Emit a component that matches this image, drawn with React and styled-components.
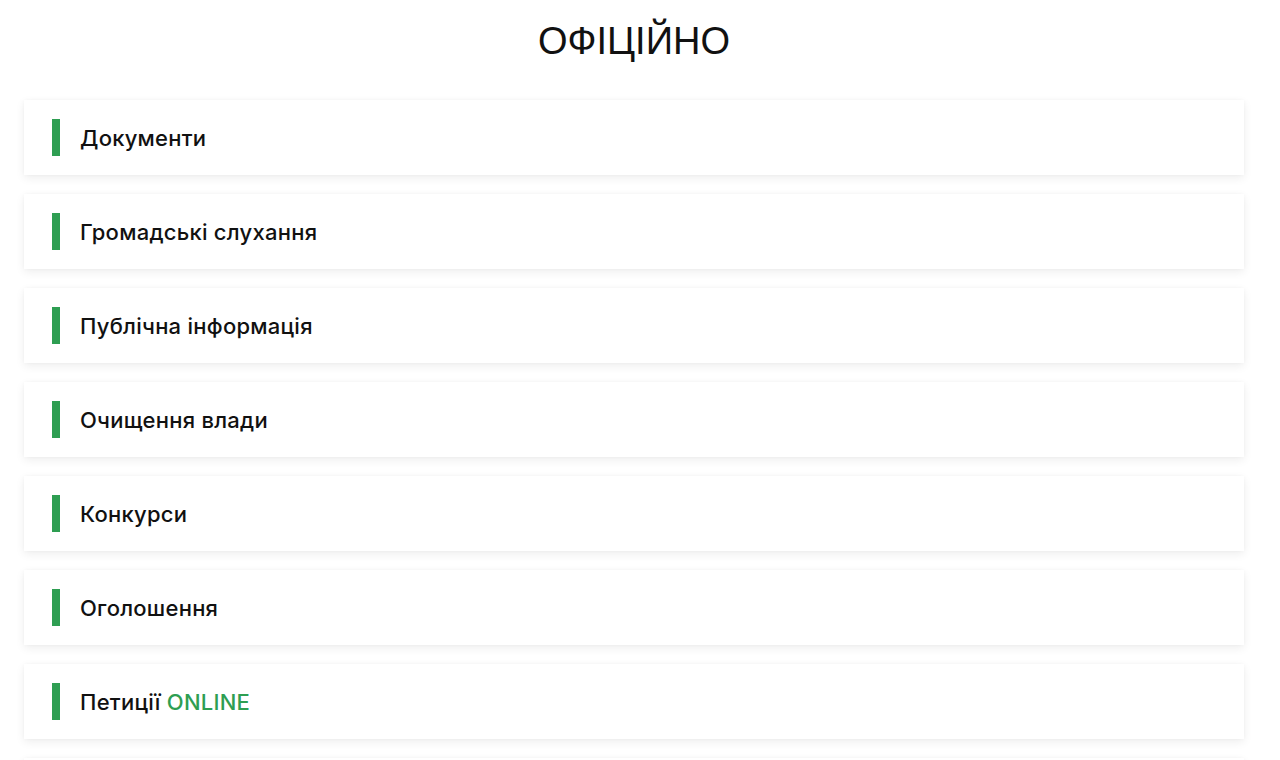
import React from "react";
import styled, { createGlobalStyle } from "styled-components";

const Global = createGlobalStyle`
  html, body { margin: 0; padding: 0; background: #fff; }
  body { font-family: Inter, "Noto Sans", sans-serif; color: #111; }
`;

const Page = styled.div`
  padding: 0 36px 0 24px;
`;

const Title = styled.h1`
  margin: 0;
  height: 100px;
  display: flex;
  align-items: center;
  justify-content: center;
  padding-bottom: 18px;
  box-sizing: border-box;
  font-family: "Liberation Sans", Arial, sans-serif;
  font-weight: 400;
  font-size: 38px;
  color: #111;
`;

const List = styled.div`
  display: flex;
  flex-direction: column;
  gap: 19px;
`;

const Card = styled.a`
  display: flex;
  align-items: center;
  gap: 20px;
  height: 75px;
  padding: 0 28px;
  background: #fff;
  box-shadow: 0 3px 9px rgba(0, 0, 0, 0.07), 0 0 3px rgba(0, 0, 0, 0.03);
  text-decoration: none;
  color: #111;
`;

const Bar = styled.span`
  width: 8px;
  height: 37px;
  background: #2e9e52;
  flex: none;
`;

const Label = styled.span`
  font-family: Inter, "Noto Sans", sans-serif;
  font-weight: 500;
  font-size: 22px;
  letter-spacing: 0.25px;
  color: #111;
`;

const Accent = styled.span`
  color: #2e9e52;
`;

const items = [
  "Документи",
  "Громадські слухання",
  "Публічна інформація",
  "Очищення влади",
  "Конкурси",
  "Оголошення",
];

export default function App() {
  return (
    <>
      <Global />
      <Page>
        <Title>ОФІЦІЙНО</Title>
        <List>
          {items.map((t) => (
            <Card key={t} href="#">
              <Bar />
              <Label>{t}</Label>
            </Card>
          ))}
          <Card href="#">
            <Bar />
            <Label>
              Петиції <Accent>ONLINE</Accent>
            </Label>
          </Card>
          <Card href="#" aria-hidden="true" />
        </List>
      </Page>
    </>
  );
}
